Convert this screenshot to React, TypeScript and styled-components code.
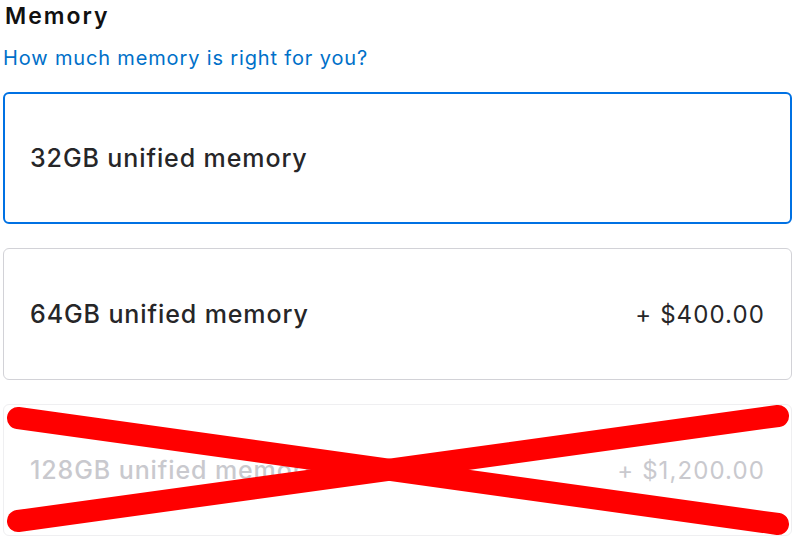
import React from "react";
import styled, { createGlobalStyle } from "styled-components";

const GlobalStyle = createGlobalStyle`
  html, body {
    margin: 0;
    padding: 0;
    background: #ffffff;
  }
  body {
    font-family: Inter, "Liberation Sans", Arial, sans-serif;
    -webkit-font-smoothing: antialiased;
  }
`;

const Page = styled.div`
  width: 800px;
  height: 544px;
  padding: 0 8px 0 3px;
  box-sizing: border-box;
  display: flex;
  flex-direction: column;
  overflow: hidden;
`;

const Title = styled.h2`
  margin: 2px 0 0 2px;
  font-size: 23px;
  line-height: 28px;
  font-weight: 600;
  color: #111111;
  letter-spacing: 2px;
`;

const HelpLink = styled.a`
  margin-top: 16px;
  font-size: 20px;
  line-height: 24px;
  color: #0070c9;
  text-decoration: none;
  letter-spacing: 0.85px;
`;

const Options = styled.div`
  margin-top: 22px;
  display: flex;
  flex-direction: column;
  gap: 24px;
`;

const Option = styled.div<{ $selected?: boolean; $disabled?: boolean }>`
  position: relative;
  height: 132px;
  box-sizing: border-box;
  display: flex;
  align-items: center;
  justify-content: space-between;
  padding: 0 26px 0 26px;
  border-radius: 6px;
  border: ${(p) =>
    p.$selected
      ? "2px solid #0071e3"
      : p.$disabled
      ? "1px solid #efeff1"
      : "1px solid #d2d2d7"};
  padding-left: ${(p) => (p.$selected ? "25px" : "26px")};
  color: ${(p) => (p.$disabled ? "#c9c9ce" : "#262628")};
`;

const Name = styled.span`
  font-size: 25px;
  font-weight: 500;
  letter-spacing: 0.9px;
`;

const Price = styled.span`
  font-size: 24px;
  font-weight: 400;
  letter-spacing: 1.1px;
`;

const Cross = styled.svg`
  position: absolute;
  left: -3px;
  top: -4px;
  width: 800px;
  height: 140px;
  pointer-events: none;
`;

const options = [
  { name: "32GB unified memory", price: "", selected: true },
  { name: "64GB unified memory", price: "+ $400.00" },
  { name: "128GB unified memory", price: "+ $1,200.00", disabled: true },
];

export default function App() {
  return (
    <Page>
      <GlobalStyle />
      <Title>Memory</Title>
      <HelpLink href="#">How much memory is right for you?</HelpLink>
      <Options>
        {options.map((o) => (
          <Option key={o.name} $selected={o.selected} $disabled={o.disabled}>
            <Name>{o.name}</Name>
            {o.price && <Price>{o.price}</Price>}
            {o.disabled && (
              <Cross viewBox="0 0 800 140">
                <g stroke="#ff0000" strokeWidth="22" strokeLinecap="round">
                  <line x1="17" y1="17" x2="777" y2="123" />
                  <line x1="17" y1="120" x2="777" y2="15" />
                </g>
              </Cross>
            )}
          </Option>
        ))}
      </Options>
    </Page>
  );
}
